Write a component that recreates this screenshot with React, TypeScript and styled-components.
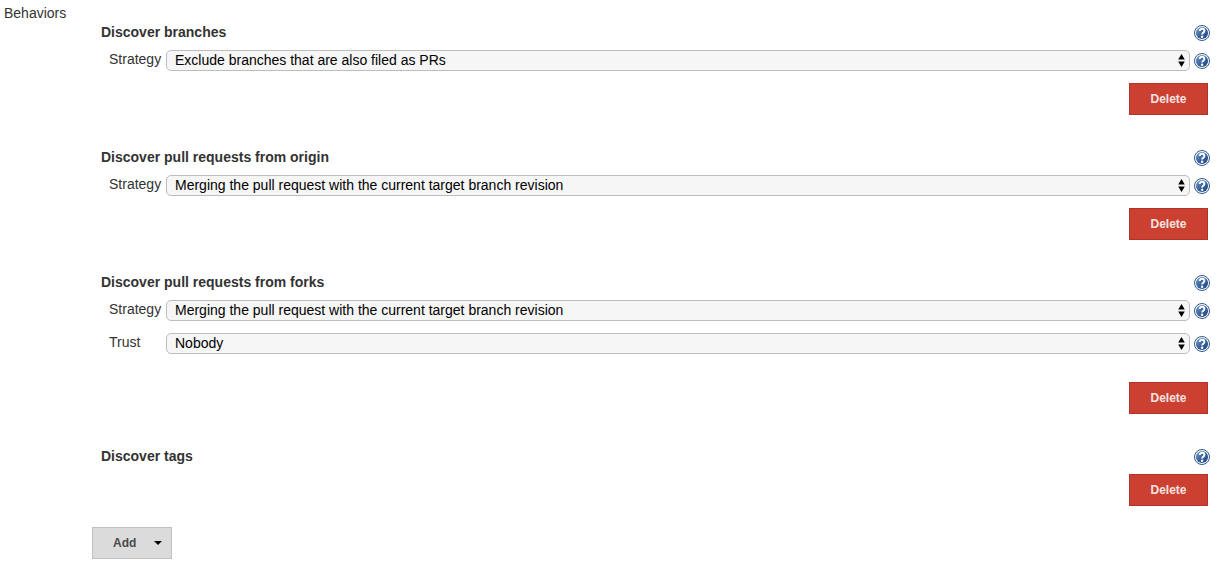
import React, { useId } from "react";
import styled, { createGlobalStyle } from "styled-components";

const GlobalStyle = createGlobalStyle`
  *, *::before, *::after { box-sizing: border-box; }
  body {
    margin: 0;
    background: #fff;
    color: #333;
    font: 14px/18px "Liberation Sans", Helvetica, Arial, sans-serif;
  }
`;

const Page = styled.main`
  display: grid;
  grid-template-columns: 88px minmax(0, 1fr);
  padding: 4px 14px 15px 4px;
`;

const GroupLabel = styled.div``;

const Content = styled.div`
  padding-top: 20px;
`;

const SectionList = styled.div`
  display: flex;
  flex-direction: column;
  gap: 34px;
  padding-left: 9px;
`;

const Section = styled.section`
  display: flex;
  flex-direction: column;
`;

const TitleRow = styled.div`
  display: flex;
  align-items: center;
  justify-content: space-between;
  height: 18px;
`;

const Title = styled.h2`
  margin: 0;
  font-size: 14px;
  line-height: 18px;
  padding-bottom: 2px;
`;

const Fields = styled.div`
  display: flex;
  flex-direction: column;
  gap: 12px;
  padding: 8px 0 4px 8px;
`;

const FieldRow = styled.div`
  display: grid;
  grid-template-columns: 57px minmax(0, 1fr) 16px;
  align-items: center;
  height: 21px;
`;

const FieldLabel = styled.label`
  align-self: start;
`;

const SelectBox = styled.div`
  position: relative;
  margin-right: 4px;
`;

const Select = styled.select`
  display: block;
  appearance: none;
  width: 100%;
  height: 21px;
  margin: 0;
  padding: 0 24px 2px 8px;
  border: 1px solid #bdbdbd;
  border-radius: 5px;
  background: #f6f6f6;
  color: #000;
  font: inherit;
`;

const SelectArrows = styled.svg`
  position: absolute;
  top: 4px;
  right: 5px;
  pointer-events: none;
`;

const HelpLink = styled.a`
  display: block;
  width: 16px;
  height: 16px;
  svg { display: block; }
`;

const FieldHelp = styled(HelpLink)`
  margin-top: 1px;
`;

const Button = styled.button`
  height: 32px;
  margin: 0;
  border: 1px solid;
  font: bold 12px/18px "Liberation Sans", Helvetica, Arial, sans-serif;
`;

const DeleteButton = styled(Button)<{ $gap: number }>`
  align-self: flex-end;
  width: 79px;
  margin: ${(p) => p.$gap}px 2px 0 0;
  border-color: #b03427;
  background: #cc4031;
  color: #f5e3e1;
`;

const AddButton = styled(Button)`
  display: flex;
  align-items: center;
  justify-content: space-between;
  width: 80px;
  margin-top: 21px;
  padding: 0 9px 0 20px;
  border-color: #bfbfbf;
  background: #dbdbdb;
  color: #4a4a4a;
`;

function HelpIcon() {
  const id = useId();
  return (
    <svg width="16" height="16" viewBox="0 0 16 16" aria-hidden="true">
      <defs>
        <linearGradient id={id} x1="0" y1="0" x2="1" y2="1">
          <stop offset="0" stopColor="#7d9fcb" />
          <stop offset="0.5" stopColor="#3a659f" />
          <stop offset="1" stopColor="#1f4480" />
        </linearGradient>
      </defs>
      <circle cx="8" cy="8" r="7.5" fill="#fff" stroke="#2f5891" strokeWidth="1" />
      <circle cx="8" cy="8" r="6.1" fill={`url(#${id})`} />
      <path
        d="M5.7 6.1C5.7 4.5 6.6 3.8 8 3.8s2.4.8 2.4 2.1c0 1.8-2.3 1.8-2.3 3.7"
        fill="none"
        stroke="#fff"
        strokeWidth="1.9"
      />
      <circle cx="8.1" cy="11.7" r="1.2" fill="#fff" />
    </svg>
  );
}

type Field = { label: string; value: string };
type Behavior = { title: string; fields: Field[]; deleteGap: number };

const merging = "Merging the pull request with the current target branch revision";

const behaviors: Behavior[] = [
  {
    title: "Discover branches",
    fields: [{ label: "Strategy", value: "Exclude branches that are also filed as PRs" }],
    deleteGap: 8,
  },
  {
    title: "Discover pull requests from origin",
    fields: [{ label: "Strategy", value: merging }],
    deleteGap: 8,
  },
  {
    title: "Discover pull requests from forks",
    fields: [
      { label: "Strategy", value: merging },
      { label: "Trust", value: "Nobody" },
    ],
    deleteGap: 24,
  },
  { title: "Discover tags", fields: [], deleteGap: 8 },
];

function SelectField({ label, value }: Field) {
  const id = useId();
  return (
    <FieldRow>
      <FieldLabel htmlFor={id}>{label}</FieldLabel>
      <SelectBox>
        <Select id={id} defaultValue={value}>
          <option>{value}</option>
        </Select>
        <SelectArrows width="7" height="13" viewBox="0 0 7 13" aria-hidden="true">
          <path d="M3.5 0L6.8 5.5H.2zM3.5 13L.2 7.5h6.6z" fill="#000" />
        </SelectArrows>
      </SelectBox>
      <FieldHelp href="#" aria-label={`Help: ${label}`}>
        <HelpIcon />
      </FieldHelp>
    </FieldRow>
  );
}

export default function App() {
  return (
    <>
      <GlobalStyle />
      <Page>
        <GroupLabel>Behaviors</GroupLabel>
        <Content>
          <SectionList>
            {behaviors.map((b) => (
              <Section key={b.title}>
                <TitleRow>
                  <Title>{b.title}</Title>
                  <HelpLink href="#" aria-label={`Help: ${b.title}`}>
                    <HelpIcon />
                  </HelpLink>
                </TitleRow>
                {b.fields.length > 0 && (
                  <Fields>
                    {b.fields.map((f) => (
                      <SelectField key={f.label} {...f} />
                    ))}
                  </Fields>
                )}
                <DeleteButton type="button" $gap={b.deleteGap}>
                  Delete
                </DeleteButton>
              </Section>
            ))}
          </SectionList>
          <AddButton type="button">
            Add
            <svg width="8" height="4" viewBox="0 0 8 4" aria-hidden="true">
              <path d="M0 0h8L4 4z" fill="#000" />
            </svg>
          </AddButton>
        </Content>
      </Page>
    </>
  );
}
